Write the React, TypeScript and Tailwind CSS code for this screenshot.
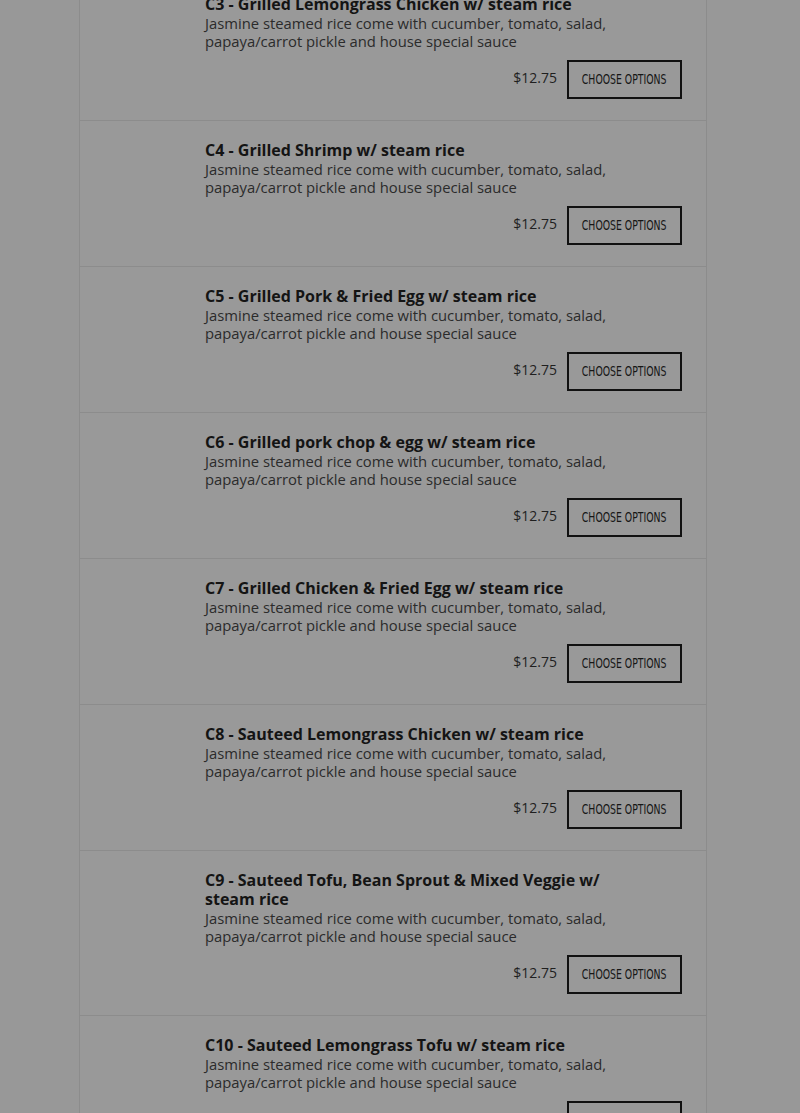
const ITEMS = [
	'C3 - Grilled Lemongrass Chicken w/ steam rice',
	'C4 - Grilled Shrimp w/ steam rice',
	'C5 - Grilled Pork & Fried Egg w/ steam rice',
	'C6 - Grilled pork chop & egg w/ steam rice',
	'C7 - Grilled Chicken & Fried Egg w/ steam rice',
	'C8 - Sauteed Lemongrass Chicken w/ steam rice',
	'C9 - Sauteed Tofu, Bean Sprout & Mixed Veggie w/ steam rice',
	'C10 - Sauteed Lemongrass Tofu w/ steam rice',
];

const DESC = 'Jasmine steamed rice come with cucumber, tomato, salad, papaya/carrot pickle and house special sauce';

function MenuRow({ title }: { title: string }) {
	return (
		<div className="border-t border-[#8c8c8c] pl-[125px] pr-[24px] pt-[20px] pb-[21px]">
			<div className="w-[440px]">
				<h3 className="text-[16px] leading-[19px] font-bold text-[#141414]">{title}</h3>
				<p className="text-[14.8px] leading-[18px] text-[#2b2b2b]">{DESC}</p>
			</div>
			<div className="mt-[10px] flex items-center justify-end gap-[10px]">
				<span className="-mt-[5px] text-[14px] text-[#1f1f1f]">$12.75</span>
				<button className="flex h-[39px] w-[115px] items-center justify-center overflow-hidden border-2 border-[#111]">
					<span className="inline-block shrink-0 origin-center scale-x-[0.74] whitespace-nowrap font-['DejaVu_Sans_Condensed','DejaVu_Sans',sans-serif] text-[14px] text-[#161616] [font-stretch:condensed]">
						CHOOSE OPTIONS
					</span>
				</button>
			</div>
		</div>
	);
}

export default function App() {
	return (
		<div className="h-[1113px] overflow-hidden bg-[#989898] font-['Open_Sans',sans-serif]">
			<div className="-mt-[26px] ml-[79px] w-[628px] border-x border-[#8c8c8c] bg-[#999999]">
				{ITEMS.map((t) => (
					<MenuRow key={t} title={t} />
				))}
			</div>
		</div>
	);
}
